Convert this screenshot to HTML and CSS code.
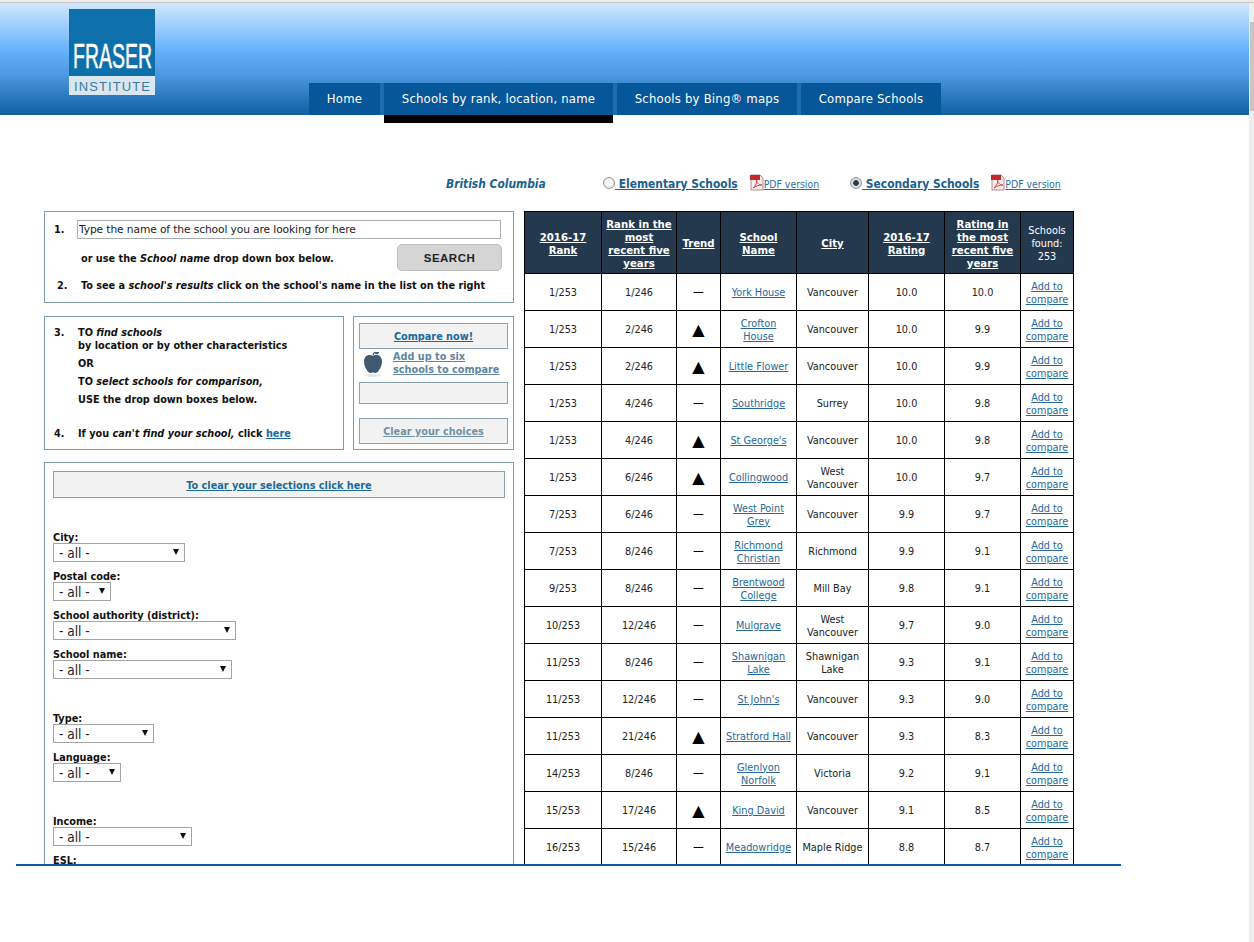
FILE: index.html
```html
<!DOCTYPE html>
<html lang="en">
<head>
<meta charset="utf-8">
<title>Fraser Institute School Rankings</title>
<link rel="stylesheet" href="styles.css">
</head>
<body>
<div class="strip"></div>
<div class="scrollbar"><div class="thumb"></div></div>
<header class="header">
  <svg class="logo" width="86" height="86" viewBox="0 0 86 86">
    <rect width="86" height="67" fill="#0e70aa"/>
    <rect y="67" width="86" height="19" fill="#dbe7f0"/>
    <text x="4" y="59" font-family="Liberation Sans, sans-serif" font-size="35" fill="#fff" stroke="#fff" stroke-width=".5" textLength="79" lengthAdjust="spacingAndGlyphs">FRASER</text>
    <text x="5" y="82" font-family="Liberation Sans, sans-serif" font-size="13" fill="#3a7a9f" textLength="76" lengthAdjust="spacing">INSTITUTE</text>
  </svg>
  <nav class="nav">
    <a class="tab tab-home">Home</a>
    <a class="tab tab-active">Schools by rank, location, name</a>
    <a class="tab tab-bing">Schools by Bing® maps</a>
    <a class="tab tab-compare">Compare Schools</a>
  </nav>
</header>
<main class="frame">
  <div class="region">
    <span class="province">British Columbia</span>
    <span class="radio radio-el"></span>
    <a class="level level-el">&nbsp;Elementary Schools</a>
    <svg class="pdf pdf-el" width="14" height="17" viewBox="0 0 14 17"><path d="M1 1h9l3 3v12H1z" fill="#f6eeee" stroke="#b98a8a"/><rect x="0" y="1" width="10" height="5" fill="#c5282c"/><path d="M3 14c3-2 4-6 3.500-8 1 4 3 5 5.500 5-3 0-6 1-9 3z" fill="none" stroke="#d0474a"/></svg>
    <a class="pdf-link">PDF version</a>
    <span class="radio radio-on radio-sec"></span>
    <a class="level">&nbsp;Secondary Schools</a>
    <svg class="pdf pdf-sec" width="14" height="17" viewBox="0 0 14 17"><path d="M1 1h9l3 3v12H1z" fill="#f6eeee" stroke="#b98a8a"/><rect x="0" y="1" width="10" height="5" fill="#c5282c"/><path d="M3 14c3-2 4-6 3.500-8 1 4 3 5 5.500 5-3 0-6 1-9 3z" fill="none" stroke="#d0474a"/></svg>
    <a class="pdf-link">PDF version</a>
  </div>
  <div class="columns">
    <div class="left">
      <section class="box box-search">
        <div class="search-row">
          <b class="num">1.</b>
          <input class="search-input" type="text" value="Type the name of the school you are looking for here">
        </div>
        <div class="or-row">
          <span class="or-text">or use the <i>School name</i> drop down box below.</span>
          <button class="search-btn">SEARCH</button>
        </div>
        <div class="see-row"><b class="num-2">2.</b><span class="see-text">To see a <i>school's results</i> click on the school's name in the list on the right</span></div>
      </section>
      <div class="pair">
        <section class="box box-steps">
          <div class="step"><b class="num-3">3.</b><p>TO <i>find schools</i><br>by location or by other characteristics</p></div>
          <p class="step-line">OR</p>
          <p class="step-line">TO <i>select schools for comparison,</i></p>
          <p class="step-line">USE the drop down boxes below.</p>
          <div class="step step-four"><b class="num-3">4.</b><p>If you <i>can't find your school,</i> click <a class="link">here</a></p></div>
        </section>
        <section class="box box-compare">
          <a class="panel panel-now">Compare now!</a>
          <div class="add-row">
            <svg class="apple" width="22" height="28" viewBox="0 0 22 28"><ellipse cx="11" cy="25.500" rx="8" ry="1.500" fill="#e3e6e8"/><path d="M11 6c3-2 9-1 9 5.500C20 17 16 23 13.500 23c-1 0-1.500-.5-2.500-.5s-1.500.5-2.500.5C6 23 2 17 2 11.500 2 5 8 4 11 6z" fill="#3f5a70"/><path d="M11 5.500c0-1.500.5-3 2-3.500M12 2.500h5l-2 1.500z" stroke="#3f5a70" fill="#3f5a70"/></svg>
            <a class="add-text">Add up to six<br>schools to compare</a>
          </div>
          <div class="panel panel-empty"></div>
          <a class="panel panel-clear">Clear your choices</a>
        </section>
      </div>
      <section class="box box-filters">
        <a class="panel panel-wide">To clear your selections click here</a>
        <div class="field field-first"><label>City:</label><span class="sel w-city"><select><option>- all -</option></select></span></div>
        <div class="field"><label>Postal code:</label><span class="sel w-postal"><select><option>- all -</option></select></span></div>
        <div class="field"><label>School authority (district):</label><span class="sel w-auth"><select><option>- all -</option></select></span></div>
        <div class="field"><label>School name:</label><span class="sel w-name"><select><option>- all -</option></select></span></div>
        <div class="field field-group"><label>Type:</label><span class="sel w-type"><select><option>- all -</option></select></span></div>
        <div class="field"><label>Language:</label><span class="sel w-lang"><select><option>- all -</option></select></span></div>
        <div class="field field-group2"><label>Income:</label><span class="sel w-income"><select><option>- all -</option></select></span></div>
        <div class="field"><label>ESL:</label><span class="sel w-city"><select><option>- all -</option></select></span></div>
      </section>
    </div>
    <table class="rank">
      <colgroup><col class="c1"><col class="c2"><col class="c3"><col class="c4"><col class="c5"><col class="c6"><col class="c7"><col class="c8"></colgroup>
      <thead>
        <tr>
          <th><a>2016-17<br>Rank</a></th><th><a>Rank in the<br>most<br>recent five<br>years</a></th><th><a>Trend</a></th><th><a>School<br>Name</a></th><th><a>City</a></th><th><a>2016-17<br>Rating</a></th><th><a>Rating in<br>the most<br>recent five<br>years</a></th><th class="found">Schools found:<br>253</th>
        </tr>
      </thead>
      <tbody>
        <tr><td>1/253</td><td>1/246</td><td class="dash">—</td><td><a>York House</a></td><td>Vancouver</td><td>10.0</td><td>10.0</td><td><a>Add to compare</a></td></tr>
        <tr><td>1/253</td><td>2/246</td><td class="up">▲</td><td><a>Crofton House</a></td><td>Vancouver</td><td>10.0</td><td>9.9</td><td><a>Add to compare</a></td></tr>
        <tr><td>1/253</td><td>2/246</td><td class="up">▲</td><td><a>Little Flower</a></td><td>Vancouver</td><td>10.0</td><td>9.9</td><td><a>Add to compare</a></td></tr>
        <tr><td>1/253</td><td>4/246</td><td class="dash">—</td><td><a>Southridge</a></td><td>Surrey</td><td>10.0</td><td>9.8</td><td><a>Add to compare</a></td></tr>
        <tr><td>1/253</td><td>4/246</td><td class="up">▲</td><td><a>St George's</a></td><td>Vancouver</td><td>10.0</td><td>9.8</td><td><a>Add to compare</a></td></tr>
        <tr><td>1/253</td><td>6/246</td><td class="up">▲</td><td><a>Collingwood</a></td><td>West Vancouver</td><td>10.0</td><td>9.7</td><td><a>Add to compare</a></td></tr>
        <tr><td>7/253</td><td>6/246</td><td class="dash">—</td><td><a>West Point Grey</a></td><td>Vancouver</td><td>9.9</td><td>9.7</td><td><a>Add to compare</a></td></tr>
        <tr><td>7/253</td><td>8/246</td><td class="dash">—</td><td><a>Richmond Christian</a></td><td>Richmond</td><td>9.9</td><td>9.1</td><td><a>Add to compare</a></td></tr>
        <tr><td>9/253</td><td>8/246</td><td class="dash">—</td><td><a>Brentwood College</a></td><td>Mill Bay</td><td>9.8</td><td>9.1</td><td><a>Add to compare</a></td></tr>
        <tr><td>10/253</td><td>12/246</td><td class="dash">—</td><td><a>Mulgrave</a></td><td>West Vancouver</td><td>9.7</td><td>9.0</td><td><a>Add to compare</a></td></tr>
        <tr><td>11/253</td><td>8/246</td><td class="dash">—</td><td><a>Shawnigan Lake</a></td><td>Shawnigan Lake</td><td>9.3</td><td>9.1</td><td><a>Add to compare</a></td></tr>
        <tr><td>11/253</td><td>12/246</td><td class="dash">—</td><td><a>St John's</a></td><td>Vancouver</td><td>9.3</td><td>9.0</td><td><a>Add to compare</a></td></tr>
        <tr><td>11/253</td><td>21/246</td><td class="up">▲</td><td><a>Stratford Hall</a></td><td>Vancouver</td><td>9.3</td><td>8.3</td><td><a>Add to compare</a></td></tr>
        <tr><td>14/253</td><td>8/246</td><td class="dash">—</td><td><a>Glenlyon Norfolk</a></td><td>Victoria</td><td>9.2</td><td>9.1</td><td><a>Add to compare</a></td></tr>
        <tr><td>15/253</td><td>17/246</td><td class="up">▲</td><td><a>King David</a></td><td>Vancouver</td><td>9.1</td><td>8.5</td><td><a>Add to compare</a></td></tr>
        <tr><td>16/253</td><td>15/246</td><td class="dash">—</td><td><a>Meadowridge</a></td><td>Maple Ridge</td><td>8.8</td><td>8.7</td><td><a>Add to compare</a></td></tr>
      </tbody>
    </table>
  </div>
</main>
</body>
</html>
```
FILE: styles.css
```css
* { box-sizing: border-box; }
html, body { margin: 0; height: 942px; overflow: hidden; background: #fff; }
body { font-family: "DejaVu Sans Condensed", "DejaVu Sans", sans-serif; font-size: 10.8px; line-height: 13px; color: #111; position: relative; }
p { margin: 0; }

.strip { height: 3px; background: #ececec; border-bottom: 1px solid #c8c8c8; }
.scrollbar { position: absolute; top: 3px; right: 0; width: 5px; height: 939px; background: #eeeeee; z-index: 3; }
.thumb { margin: 19px 0 0 1px; height: 89px; background: #c4c6c8; }

.header { height: 112px; margin-right: 5px; position: relative; display: flex; align-items: flex-start; padding: 6px 0 0 69px;
  background: linear-gradient(#cfe7fe 0, #9fd0fd 22px, #64b1fb 48px, #4d98e0 72px, #1a6ab0 104px, #15619f 112px); }
.logo { display: block; flex: none; }
.nav { display: flex; margin: 74px 0 0 154px; color: #fff; font-size: 13px; }
.tab { display: flex; align-items: center; justify-content: center; height: 32px; padding-bottom: 2px; background: #06569a; margin-right: 4px; position: relative; letter-spacing: .2px; box-shadow: 4px 0 0 #1d6cb0; }
.tab-home { width: 71px; }
.tab-active { width: 229px; }
.tab-active::after { content: ""; position: absolute; left: 0; right: 0; top: 32px; height: 8px; background: #000; }
.tab-bing { width: 180px; }
.tab-compare { width: 140px; box-shadow: none; }

.frame { margin-left: 16px; width: 1105px; height: 751px; overflow: hidden; border-bottom: 2px solid #0f5a96; padding-left: 28px; }

.region { display: flex; align-items: center; height: 20px; margin-top: 59px; margin-bottom: -1px; color: #1b5f8f; padding-left: 402px; }
.province { font-style: italic; font-size: 11.9px; width: 157px; font-weight: 600; color: #1b5f8f; }
.radio { width: 12px; height: 12px; border-radius: 50%; border: 1px solid #9a9a9a; background: radial-gradient(circle, #fafafa 30%, #d8d8d8 100%); flex: none; margin-bottom: 3px; }
.radio-on { background: radial-gradient(circle, #223a50 35%, #e8e8e8 45%, #b8b8b8 100%); }
.radio-sec { margin-left: 31px; }
.level { font-weight: bold; font-size: 11.9px; color: #1b5f8f; text-decoration: underline; white-space: nowrap; }
.pdf { flex: none; margin-bottom: 3px; }
.pdf-el, .pdf-sec { margin-left: 12px; }
.pdf-link { color: #2a6f9f; text-decoration: underline; font-size: 10.4px; white-space: nowrap; }

.columns { display: flex; margin-top: 18px; align-items: flex-start; }
.left { width: 470px; flex: none; margin-right: 10px; }
.box { border: 1px solid #7d9bab; background: #fff; }
.box b { font-weight: bold; }
.box-search { height: 92px; font-weight: bold; padding: 8px 11px 0 8px; }
.search-row { display: flex; align-items: center; height: 19px; }
.num { width: 24px; flex: none; text-indent: 1px; }
.search-input { width: 424px; height: 19px; border: 1px solid #a8b0b4; padding: 0 1px; font: 10.7px/13px "DejaVu Sans", sans-serif; color: #222; letter-spacing: -.12px; }
.or-row { display: flex; align-items: center; justify-content: space-between; margin-top: 5px; height: 27px; padding-left: 28px; }
.or-text { padding-top: 2px; }
.search-btn { width: 105px; height: 27px; border: 1px solid #bdbdbd; border-radius: 5px; background: #d5d5d5; font: bold 11.5px "Liberation Sans", sans-serif; color: #222; letter-spacing: .5px; }
.see-row { display: flex; margin-top: 8px; padding-left: 4px; }
.num-2 { width: 24px; flex: none; }
.see-text { white-space: nowrap; }

.pair { display: flex; justify-content: space-between; margin-top: 13px; }
.box-steps { width: 300px; height: 134px; padding: 9px 9px 0 8px; font-weight: bold; }
.step { display: flex; }
.num-3 { width: 25px; flex: none; text-indent: 1px; }
.step-line { padding-left: 25px; margin-top: 5px; }
.step-four { margin-top: 21px; }
.link { color: #1b6a9c; text-decoration: underline; }
.box-compare { width: 161px; height: 134px; padding: 6px 5px 0 5px; font-weight: bold; }
.panel { display: flex; align-items: center; justify-content: center; background: #f2f2f2; border: 1px solid #8ba3b0; text-decoration: underline; color: #1b6a9c; }
.panel-now { height: 26px; }
.add-row { display: flex; align-items: flex-start; height: 33px; }
.apple { margin: 1px 0 0 3px; flex: none; }
.add-text { margin: 1px 0 0 9px; color: #5f86a0; text-decoration: underline; white-space: nowrap; }
.panel-empty { height: 22px; }
.panel-clear { height: 26px; margin-top: 14px; padding-top: 1px; color: #6f92a8; }

.box-filters { margin-top: 12px; height: 500px; padding: 8px 8px 0 8px; font-weight: bold; }
.panel-wide { height: 27px; padding-top: 2px; }
.field { display: flex; flex-direction: column; align-items: flex-start; margin-top: 7px; }
.field label { height: 13px; line-height: 15px; }
.field-first { margin-top: 32px; }
.field-group { margin-top: 32px; }
.field-group2 { margin-top: 32px; }
.sel { display: block; position: relative; height: 19px; }
.sel select { appearance: none; -webkit-appearance: none; display: block; width: 100%; height: 19px; border: 1px solid #a4a4a4; border-radius: 0; background: #fff; font: 13.5px "DejaVu Sans Condensed", "DejaVu Sans", sans-serif; color: #222; padding: 0 0 0 5px; }
.sel::after { content: ""; position: absolute; right: 6px; top: 6px; border-left: 3px solid transparent; border-right: 3px solid transparent; border-top: 6px solid #111; }
.w-city { width: 132px; }
.w-postal { width: 58px; }
.w-auth { width: 183px; }
.w-name { width: 179px; }
.w-type { width: 101px; }
.w-lang { width: 68px; }
.w-income { width: 139px; }

.rank { border-collapse: collapse; table-layout: fixed; width: 549px; flex: none; }
.c1 { width: 77px; } .c2 { width: 75px; } .c3 { width: 44px; } .c4 { width: 76px; } .c5 { width: 72px; } .c6 { width: 76px; } .c7 { width: 76px; } .c8 { width: 53px; }
.rank th { border: 1px solid #000; text-align: center; padding: 2px 2px 0; height: 62px; background: #24394e; color: #fff; font-weight: bold; font-size: 11.3px; }
.rank td { border: 1px solid #000; text-align: center; padding: 1px 4.5px 0; height: 37px; font-size: 10.8px; color: #222; }
.rank th a { text-decoration: underline; }
.rank th.found { font-weight: normal; font-size: 10.8px; }
.rank td a { color: #27689a; text-decoration: underline; }
.rank td.up { font: 21px/13px "Liberation Sans", sans-serif; color: #000; padding: 0; }
.rank td.dash { color: #000; font-size: 12px; padding: 0; }
```
